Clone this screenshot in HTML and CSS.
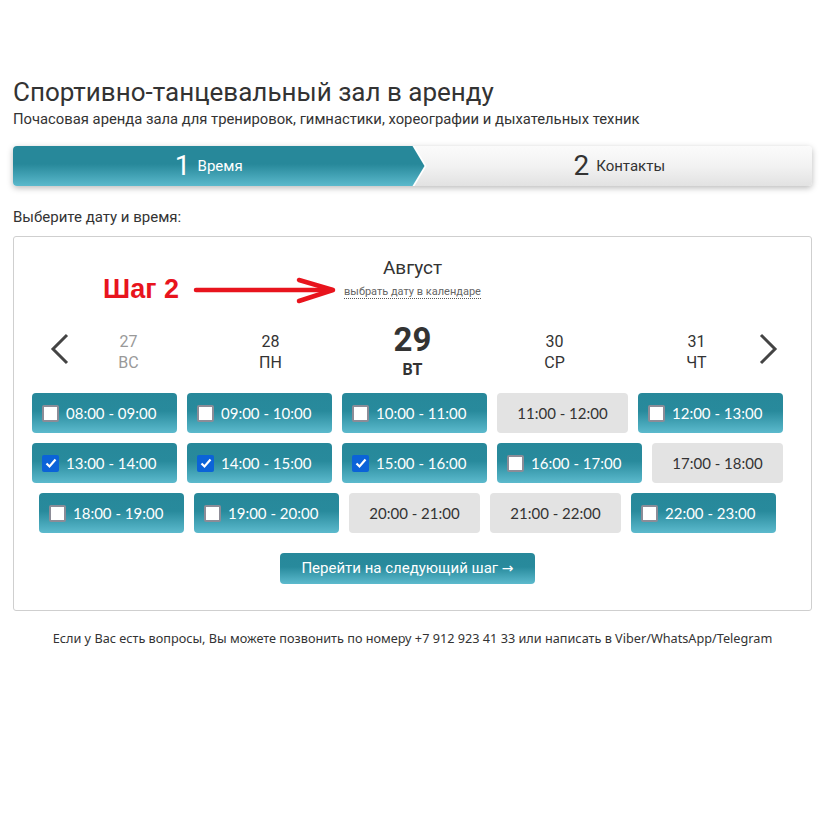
FILE: index.html
```html
<!DOCTYPE html>
<html lang="ru">
<head>
	<meta charset="UTF-8">
	<title>Аренда зала</title>
	<link rel="stylesheet" href="styles.css">
</head>
<body>
<div class="page">
	<h1 class="title">Спортивно-танцевальный зал в аренду</h1>
	<p class="subtitle">Почасовая аренда зала для тренировок, гимнастики, хореографии и дыхательных техник</p>

	<div class="steps">
		<div class="step-arrow">
			<div class="step-fill">
				<span class="step-num">1</span> Время
			</div>
		</div>
		<div class="step">
			<span class="step-num">2</span> Контакты
		</div>
	</div>

	<p class="prompt">Выберите дату и время:</p>

	<div class="calendar">
		<div class="month">Август</div>
		<div class="month-link"><span class="dotted">выбрать дату в календаре</span></div>

		<!-- пометка на скриншоте -->
		<div class="note">
			<span class="note-text">Шаг 2</span>
			<svg class="note-arrow" width="150" height="30" viewBox="0 0 150 30">
				<path d="M3 15 L139 15" stroke="#e8141d" stroke-width="4.5" stroke-linecap="round" fill="none"/>
				<path d="M106 5 L140 15 L106 26" stroke="#e8141d" stroke-width="4.5" stroke-linecap="round" stroke-linejoin="round" fill="none"/>
			</svg>
		</div>

		<div class="days">
			<a class="day-nav day-prev" href="#">
				<svg width="20" height="32" viewBox="0 0 20 32"><polyline points="17,2 3,16 17,30" fill="none" stroke="#444" stroke-width="3"/></svg>
			</a>
			<div class="day is-past"><div class="day-num">27</div><div class="day-name">ВС</div></div>
			<div class="day"><div class="day-num">28</div><div class="day-name">ПН</div></div>
			<div class="day is-current"><div class="day-num">29</div><div class="day-name">ВТ</div></div>
			<div class="day"><div class="day-num">30</div><div class="day-name">СР</div></div>
			<div class="day"><div class="day-num">31</div><div class="day-name">ЧТ</div></div>
			<a class="day-nav day-next" href="#">
				<svg width="20" height="32" viewBox="0 0 20 32"><polyline points="3,2 17,16 3,30" fill="none" stroke="#444" stroke-width="3"/></svg>
			</a>
		</div>

		<div class="slots">
			<label class="slot"><span class="box"></span>08:00 - 09:00</label>
			<label class="slot"><span class="box"></span>09:00 - 10:00</label>
			<label class="slot"><span class="box"></span>10:00 - 11:00</label>
			<div class="slot is-busy">11:00 - 12:00</div>
			<label class="slot"><span class="box"></span>12:00 - 13:00</label>
			<label class="slot"><span class="box is-checked"><svg width="12" height="12" viewBox="0 0 12 12"><polyline points="1.5,6.5 4.5,9.5 10.5,2.5" fill="none" stroke="#fff" stroke-width="2.2"/></svg></span>13:00 - 14:00</label>
			<label class="slot"><span class="box is-checked"><svg width="12" height="12" viewBox="0 0 12 12"><polyline points="1.5,6.5 4.5,9.5 10.5,2.5" fill="none" stroke="#fff" stroke-width="2.2"/></svg></span>14:00 - 15:00</label>
			<label class="slot"><span class="box is-checked"><svg width="12" height="12" viewBox="0 0 12 12"><polyline points="1.5,6.5 4.5,9.5 10.5,2.5" fill="none" stroke="#fff" stroke-width="2.2"/></svg></span>15:00 - 16:00</label>
			<label class="slot"><span class="box"></span>16:00 - 17:00</label>
			<div class="slot is-busy">17:00 - 18:00</div>
			<label class="slot"><span class="box"></span>18:00 - 19:00</label>
			<label class="slot"><span class="box"></span>19:00 - 20:00</label>
			<div class="slot is-busy">20:00 - 21:00</div>
			<div class="slot is-busy">21:00 - 22:00</div>
			<label class="slot"><span class="box"></span>22:00 - 23:00</label>
		</div>

		<div class="actions">
			<a class="next-btn" href="#">Перейти на следующий шаг <span class="arr">&rarr;</span></a>
		</div>
	</div>

	<p class="footer">Если у Вас есть вопросы, Вы можете позвонить по номеру +7 912 923 41 33 или написать в Viber/WhatsApp/Telegram</p>
</div>
</body>
</html>
```

FILE: styles.css
```css
body {
    margin: 0;
    background: #fff;
    color: #333;
    font-family: Roboto, "Noto Sans", sans-serif;
}
.page {
    padding: 75px 10px 40px 13px;
}
.title {
    margin: 0;
    font-size: 26px;
    line-height: 34px;
    font-weight: normal;
    color: #333;
}
.subtitle {
    margin: 0;
    font-size: 14.8px;
    line-height: 20px;
    color: #333;
}

/* шаги */
.steps {
    display: flex;
    height: 40px;
    margin-top: 17px;
    border-radius: 4px;
    background: linear-gradient(#fbfbfb, #f2f2f2 50%, #e2e2e2);
    box-shadow: 0 2px 6px rgba(0,0,0,.28);
}
.step-arrow {
    width: calc(50% + 14px);
    background: #fff;
    border-radius: 4px 0 0 4px;
    clip-path: polygon(0 0, calc(100% - 12px) 0, 100% 50%, calc(100% - 12px) 100%, 0 100%);
}
.step-fill {
    height: 100%;
    display: flex;
    align-items: center;
    justify-content: center;
    padding-right: 22px;
    box-sizing: border-box;
    color: #fff;
    font-size: 15px;
    border-radius: 4px 0 0 4px;
    background: linear-gradient(#27889a, #27889a 45%, #5bb9cc);
    clip-path: polygon(0 0, calc(100% - 14px) 0, calc(100% - 2px) 50%, calc(100% - 14px) 100%, 0 100%);
}
.step {
    flex: 1;
    display: flex;
    align-items: center;
    justify-content: center;
    font-size: 15px;
    color: #333;
}
.step-num {
    font-size: 28px;
    margin-right: 7px;
    line-height: 1;
}

.prompt {
    margin: 21px 0 0;
    font-size: 15px;
    line-height: 20px;
}

/* календарь */
.calendar {
    position: relative;
    margin-top: 9px;
    padding: 19px 0 26px;
    border: 1px solid #cfcfcf;
    border-radius: 3px;
}
.month {
    text-align: center;
    font-size: 19px;
    line-height: 24px;
}
.month-link {
    text-align: center;
    margin-top: 4px;
    font-size: 11px;
    line-height: 15px;
    color: #666;
}
.dotted {
    border-bottom: 1px dotted #555;
}
.note {
    position: absolute;
    left: 89px;
    top: 37px;
    display: flex;
    align-items: center;
}
.note-text {
    font-family: "Liberation Sans", Arial, sans-serif;
    font-weight: bold;
    font-size: 27px;
    color: #e8141d;
    margin-right: 14px;
}

.days {
    position: relative;
    display: flex;
    justify-content: center;
    margin-top: 23px;
    height: 62px;
}
.day {
    width: 142px;
    text-align: center;
    font-size: 16px;
    line-height: 21px;
    padding-top: 9px;
}
.day.is-past {
    color: #999;
}
.day.is-current {
    padding-top: 0;
}
.day.is-current .day-num {
    font-size: 33px;
    line-height: 36px;
    font-weight: bold;
}
.day.is-current .day-name {
    font-weight: bold;
    font-size: 16px;
    margin-top: 1px;
}
.day-nav {
    position: absolute;
    top: 11px;
    display: block;
}
.day-prev {
    left: 36px;
}
.day-next {
    right: 33px;
}

/* слоты */
.slots {
    display: flex;
    flex-wrap: wrap;
    justify-content: center;
    margin-top: 9px;
}
.slot {
    box-sizing: border-box;
    width: 145px;
    height: 40px;
    margin: 0 10px 10px 0;
    display: flex;
    align-items: center;
    padding-left: 10px;
    border-radius: 4px;
    font-family: Lato, sans-serif;
    font-size: 15px;
    color: #fff;
    background: linear-gradient(#27889a, #288a9c 45%, #5cbacd);
    cursor: pointer;
}
.slot.is-busy {
    width: 131px;
    padding-left: 0;
    justify-content: center;
    background: #e3e3e3;
    color: #333;
    cursor: default;
}
.box {
    box-sizing: border-box;
    width: 17px;
    height: 17px;
    margin-right: 7px;
    border: 2px solid #8c8c97;
    border-radius: 2px;
    background: #fff;
    display: flex;
    align-items: center;
    justify-content: center;
}
.box.is-checked {
    border: none;
    background: #0b63d8;
}

.actions {
    text-align: center;
    margin-top: 10px;
}
.next-btn {
    display: inline-block;
    width: 255px;
    height: 31px;
    line-height: 31px;
    margin-right: 10px;
    border-radius: 4px;
    color: #fff;
    text-decoration: none;
    font-size: 15px;
    background: linear-gradient(#27889a, #288a9c 45%, #5cbacd);
}
.arr {
    font-family: "DejaVu Sans", sans-serif;
    font-size: 14px;
}

.footer {
    margin: 18px 0 0;
    text-align: center;
    font-family: "Noto Sans", sans-serif;
    font-size: 12.7px;
    line-height: 18px;
}
```
